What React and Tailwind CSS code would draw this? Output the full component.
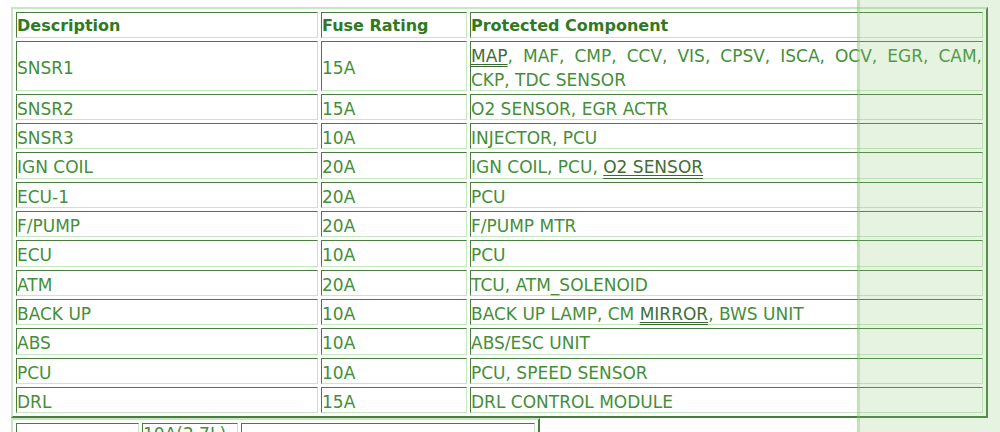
const cellCls =
  "flex items-center pt-[3px] border border-t-[#4a7c42] border-l-[#4a7c42] border-b-[#c6e8c0] border-r-[#c6e8c0] text-[17px] leading-[24px] text-[#438f38] whitespace-nowrap";

const headCls =
  "flex items-center pt-[2px] h-[26px] border border-t-[#4a7c42] border-l-[#4a7c42] border-b-[#c6e8c0] border-r-[#c6e8c0] text-[16px] leading-[24px] font-bold text-[#2f7a1f]";

const lowCls =
  "flex items-start h-[50px] border border-t-[#4a7c42] border-l-[#4a7c42] border-b-[#c6e8c0] border-r-[#c6e8c0] text-[17px] leading-[20px] text-[#438f38] whitespace-nowrap";

const Link = ({ children }) => (
  <span className="text-[#3f6e37] underline decoration-double decoration-[#3a6a32] underline-offset-2">
    {children}
  </span>
);

const rows = [
  { d: "SNSR2", r: "15A", p: "O2 SENSOR, EGR ACTR", h: "h-[26px]" },
  { d: "SNSR3", r: "10A", p: "INJECTOR, PCU", h: "h-[26px]" },
  {
    d: "IGN COIL",
    r: "20A",
    p: (
      <span>
        IGN COIL, PCU, <Link>O2 SENSOR</Link>
      </span>
    ),
    h: "h-[27px]",
  },
  { d: "ECU-1", r: "20A", p: "PCU", h: "h-[26px]" },
  { d: "F/PUMP", r: "20A", p: "F/PUMP MTR", h: "h-[26px]" },
  { d: "ECU", r: "10A", p: "PCU", h: "h-[27px]" },
  { d: "ATM", r: "20A", p: "TCU, ATM_SOLENOID", h: "h-[26px]" },
  {
    d: "BACK UP",
    r: "10A",
    p: (
      <span>
        BACK UP LAMP, CM <Link>MIRROR</Link>, BWS UNIT
      </span>
    ),
    h: "h-[26px]",
  },
  { d: "ABS", r: "10A", p: "ABS/ESC UNIT", h: "h-[27px]" },
  { d: "PCU", r: "10A", p: "PCU, SPEED SENSOR", h: "h-[26px]" },
  { d: "DRL", r: "15A", p: "DRL CONTROL MODULE", h: "h-[26px]" },
];

export default function App() {
  return (
    <div className="relative h-[432px] w-[1000px] overflow-hidden bg-white font-['DejaVu_Sans','Verdana',sans-serif]">
      {/* main fuse table */}
      <div className="ml-[11px] mt-[7px] grid w-[977px] grid-cols-[302px_146px_513px] gap-[3px] border-2 border-t-[#c6e8c0] border-l-[#c6e8c0] border-b-[#4a7c42] border-r-[#4a7c42] p-[3px]">
        <div className={headCls}>Description</div>
        <div className={headCls}>Fuse Rating</div>
        <div className={headCls}>Protected Component</div>

        <div className={`${cellCls} h-[50px]`}>SNSR1</div>
        <div className={`${cellCls} h-[50px]`}>15A</div>
        <div className={`${cellCls} h-[50px] flex-col !items-stretch justify-center`}>
          <div className="text-justify [text-align-last:justify]">
            <Link>MAP</Link>, MAF, CMP, CCV, VIS, CPSV, ISCA, OCV, EGR, CAM,
          </div>
          <div>CKP, TDC SENSOR</div>
        </div>

        {rows.map((row) => (
          <div key={row.d} className="contents">
            <div className={`${cellCls} ${row.h}`}>{row.d}</div>
            <div className={`${cellCls} ${row.h}`}>{row.r}</div>
            <div className={`${cellCls} ${row.h}`}>{row.p}</div>
          </div>
        ))}
      </div>

      {/* next table, cut off by the window */}
      <div className="ml-[11px] grid w-[529px] grid-cols-[123px_96px_294px] gap-[3px] border-2 border-t-[#c6e8c0] border-l-[#c6e8c0] border-b-[#4a7c42] border-r-[#4a7c42] p-[3px]">
        <div className={lowCls}></div>
        <div className={lowCls}>10A(2.7L)</div>
        <div className={lowCls}></div>
      </div>

      {/* translucent side panel */}
      <div className="absolute right-0 top-0 h-full w-[143px] border-l-[3px] border-[rgba(120,195,100,0.35)] bg-[rgba(140,200,120,0.22)]" />
    </div>
  );
}
